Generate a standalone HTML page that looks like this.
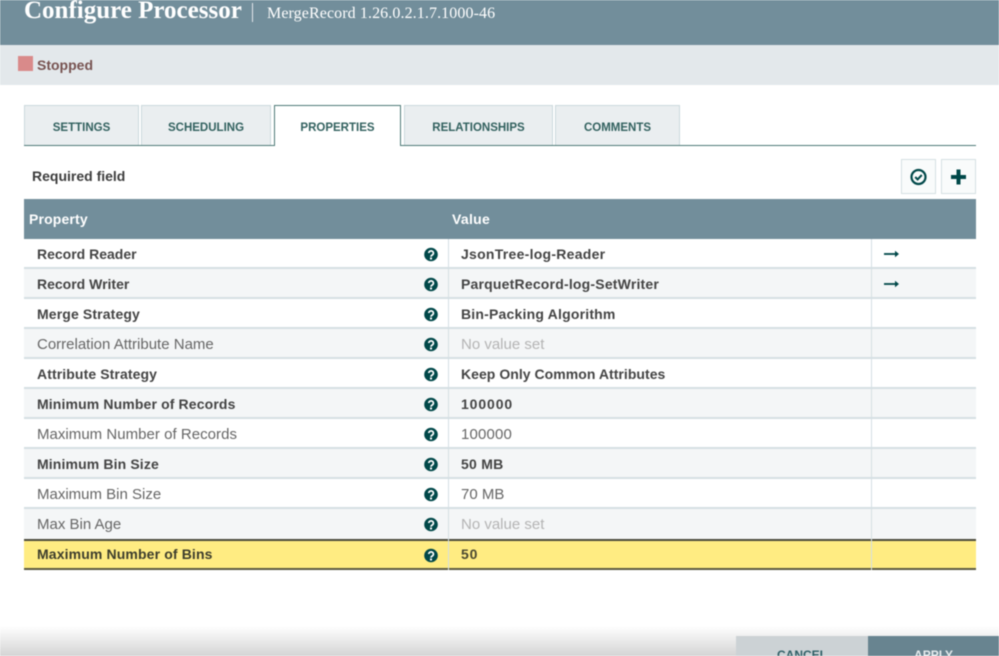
<!DOCTYPE html>
<html><head><meta charset="utf-8">
<style>
html,body{margin:0;padding:0;background:#fff}
#p{position:relative;width:999px;height:656px;overflow:hidden;background:#fff;font-family:"Liberation Sans",sans-serif;filter:blur(0.45px)}
#p div{position:absolute;white-space:nowrap;box-sizing:border-box}
.tab{top:105px;height:40px;background:#eaeef0;border:1px solid #cbd8dc;border-bottom:none;color:#32615f;font-size:11.5px;font-weight:bold;text-align:center;line-height:45px}
.row{left:24px;width:952px;height:30px;border-bottom:2px solid #d5dfe3}
.t{font-size:14px;top:1px;line-height:29px}
.n{left:13px;color:#444;font-weight:bold;letter-spacing:.13px}
.nr{left:13px;color:#666;font-weight:normal;font-size:15px}
.v{left:437px;color:#444;font-weight:bold;letter-spacing:.2px}
.vr{left:437px;color:#666;font-size:15px}
.vn{left:437px;color:#b4b4b4;font-size:15px}
.q{left:400px;top:7.500px}
.arr{left:860px;top:8px}
.vl{top:239px;width:1.500px;height:331px;background:#d5dfe3}
</style></head><body>
<div id="p">
<div style="left:0;top:0;width:999px;height:45px;background:#728e9b"></div>
<div style="left:24px;top:-3px;font-family:'Liberation Serif',serif;font-weight:bold;font-size:25px;line-height:28px;color:#fff">Configure Processor</div>
<div style="left:252px;top:3px;width:1px;height:19px;background:#e3e8eb"></div>
<div style="left:267px;top:4px;font-family:'Liberation Serif',serif;font-size:16px;line-height:20px;color:#fff;letter-spacing:.1px">MergeRecord 1.26.0.2.1.7.1000-46</div>
<div style="left:0;top:45px;width:999px;height:40px;background:#e3e8eb"></div>
<div style="left:18px;top:56px;width:15px;height:15px;background:#d98a8a"></div>
<div style="left:37px;top:55px;font-size:14px;line-height:20px;font-weight:bold;color:#775351">Stopped</div>

<div style="left:24px;top:145px;width:952px;height:1px;background:#4f7a78"></div>
<div class="tab" style="left:24px;width:115px">SETTINGS</div>
<div class="tab" style="left:141px;width:130px">SCHEDULING</div>
<div class="tab" style="left:274px;width:127px;height:41px;background:#fff;border:1px solid #4f7a78;border-bottom:none;z-index:2">PROPERTIES</div>
<div class="tab" style="left:404px;width:149px">RELATIONSHIPS</div>
<div class="tab" style="left:555px;width:125px">COMMENTS</div>

<div style="left:32px;top:167px;font-size:14px;line-height:18px;font-weight:bold;color:#3d3d3d">Required field</div>
<div style="left:901px;top:159px;width:35px;height:35px;background:#f9fbfb;border:1px solid #d5e0e2"></div>
<div style="left:941px;top:159px;width:35px;height:35px;background:#f9fbfb;border:1px solid #d5e0e2"></div>
<svg style="position:absolute;left:909px;top:167px" width="20" height="20" viewBox="0 0 20 20"><circle cx="9.500" cy="10" r="7" fill="none" stroke="#004849" stroke-width="2.200"/><path d="M6.200 10l2.400 2.400 4.200-4.400" fill="none" stroke="#004849" stroke-width="2"/></svg>
<svg style="position:absolute;left:949px;top:167px" width="20" height="20" viewBox="0 0 20 20"><path d="M2 10h15M9.500 2.500v15" fill="none" stroke="#004849" stroke-width="4"/></svg>

<div style="left:24px;top:199px;width:952px;height:40px;background:#728e9b"></div>
<div style="left:29px;top:209px;font-size:14px;line-height:20px;font-weight:bold;color:#fff;letter-spacing:.15px">Property</div>
<div style="left:452px;top:209px;font-size:14px;line-height:20px;font-weight:bold;color:#fff;letter-spacing:.3px">Value</div>

<div class="row" style="top:239px;background:#fff"><div class="t n" style="letter-spacing:0">Record Reader</div><svg class="q" style="position:absolute" width="15" height="15"><use href="#q"/></svg><div class="t v" style="letter-spacing:.27px">JsonTree-log-Reader</div><svg class="arr" style="position:absolute" width="16" height="14"><use href="#a"/></svg></div>
<div class="row" style="top:269px;background:#f4f6f7"><div class="t n" style="letter-spacing:0">Record Writer</div><svg class="q" style="position:absolute" width="15" height="15"><use href="#q"/></svg><div class="t v">ParquetRecord-log-SetWriter</div><svg class="arr" style="position:absolute" width="16" height="14"><use href="#a"/></svg></div>
<div class="row" style="top:299px;background:#fff"><div class="t n">Merge Strategy</div><svg class="q" style="position:absolute" width="15" height="15"><use href="#q"/></svg><div class="t v">Bin-Packing Algorithm</div></div>
<div class="row" style="top:329px;background:#f4f6f7"><div class="t nr">Correlation Attribute Name</div><svg class="q" style="position:absolute" width="15" height="15"><use href="#q"/></svg><div class="t vn">No value set</div></div>
<div class="row" style="top:359px;background:#fff"><div class="t n" style="letter-spacing:.1px">Attribute Strategy</div><svg class="q" style="position:absolute" width="15" height="15"><use href="#q"/></svg><div class="t v" style="letter-spacing:.04px">Keep Only Common Attributes</div></div>
<div class="row" style="top:389px;background:#f4f6f7"><div class="t n">Minimum Number of Records</div><svg class="q" style="position:absolute" width="15" height="15"><use href="#q"/></svg><div class="t v" style="letter-spacing:.9px">100000</div></div>
<div class="row" style="top:419px;background:#fff"><div class="t nr" style="letter-spacing:.03px">Maximum Number of Records</div><svg class="q" style="position:absolute" width="15" height="15"><use href="#q"/></svg><div class="t vr" style="letter-spacing:.15px">100000</div></div>
<div class="row" style="top:449px;background:#f4f6f7"><div class="t n">Minimum Bin Size</div><svg class="q" style="position:absolute" width="15" height="15"><use href="#q"/></svg><div class="t v" style="letter-spacing:.25px">50 MB</div></div>
<div class="row" style="top:479px;background:#fff"><div class="t nr">Maximum Bin Size</div><svg class="q" style="position:absolute" width="15" height="15"><use href="#q"/></svg><div class="t vr">70 MB</div></div>
<div class="row" style="top:509px;background:#f4f6f7;border-bottom:none"><div class="t nr">Max Bin Age</div><svg class="q" style="position:absolute" width="15" height="15"><use href="#q"/></svg><div class="t vn">No value set</div></div>
<div class="row" style="top:539px;height:31px;background:#ffec82;border-top:2px solid #4b4b3c;border-bottom:2px solid #5b5a40"><div class="t n" style="top:-1px;color:#3d3d2c">Maximum Number of Bins</div><svg class="q" style="position:absolute;top:6.500px" width="15" height="15"><use href="#q"/></svg><div class="t v" style="top:-1px;color:#4a4830;letter-spacing:.8px">50</div></div>
<div class="vl" style="left:447.500px"></div>
<div class="vl" style="left:870.500px"></div>

<div style="left:0;top:626px;width:999px;height:30px;background:linear-gradient(#fff,#d4d4d4)"></div>
<div style="left:736px;top:636px;width:132px;height:20px;background:#ccd2d5;color:#2f5f66;font-size:12px;font-weight:bold;text-align:center;line-height:38px">CANCEL</div>
<div style="left:868px;top:636px;width:131px;height:20px;background:#688490;color:#e6ecee;font-size:12px;font-weight:bold;text-align:center;line-height:38px">APPLY</div>

<svg width="0" height="0" style="position:absolute"><defs>
<g id="q"><circle cx="7" cy="7.500" r="6.800" fill="#004849"/><path d="M4.800 6a2.300 2.200 0 1 1 3.400 2c-.8.500-1.200.8-1.200 1.700" fill="none" stroke="#fff" stroke-width="1.700"/><rect x="6" y="10.500" width="2" height="2" fill="#fff"/></g>
<g id="a"><path d="M0 7h13" stroke="#004849" stroke-width="1.800"/><path d="M11 3.800l4 3.200-4 3.200z" fill="#004849"/></g>
</defs></svg>
</div>
</body></html>
